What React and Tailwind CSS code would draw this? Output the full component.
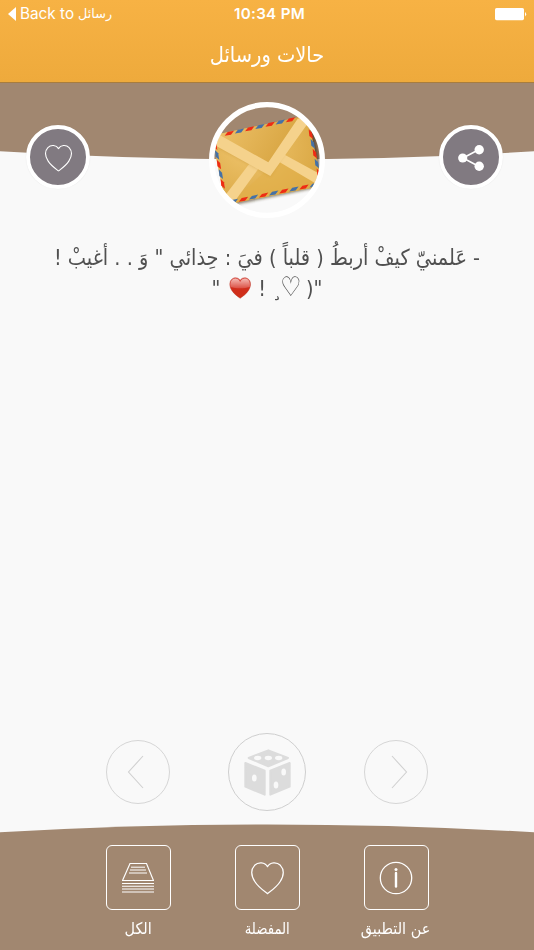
import React from "react";

const heartPath =
  "M50 15 C42 1 22 0 11 11 C-2 25 2 45 12 61 C22 77 37 87 50 97 C63 87 78 77 88 61 C98 45 102 25 89 11 C78 0 58 1 50 15 Z";

function Heart({ className, strokeWidth }) {
  return (
    <svg viewBox="-3 -2 106 103" className={className} fill="none" stroke="currentColor" strokeWidth={strokeWidth}>
      <path d={heartPath} strokeLinejoin="round" />
    </svg>
  );
}

const RED = "#ee2c14";
const BLUE = "#4571a6";

// Slanted airmail stripes, alternating colours from the first centre (x, y) along (dx, dy).
function Stripes({ x, y, dx, dy, count, first, shape }) {
  const other = first === RED ? BLUE : RED;
  return Array.from({ length: count }, (_, i) => (
    <path key={i} d={shape} transform={`translate(${x + dx * i} ${y + dy * i})`} fill={i % 2 ? other : first} />
  ));
}

function Envelope() {
  const across = "M-14 7 L-5 -4 L14 -8 L5 4 Z";
  const down = "M-6 -15 L4 -5 L7 14 L-4 5 Z";
  return (
    <svg viewBox="57 36 348 348" className="ml-[4px] block h-[116px] w-[116px]">
      <defs>
        <clipPath id="disc"><circle cx="231" cy="210" r="159" /></clipPath>
        <clipPath id="paper"><path d="M66 143 Q66 137 73 135 L330 81 Q350 78 355 92 L397 281 Q397 287 390 289 L118 342 Q108 343 105 335 Z" /></clipPath>
        <radialGradient id="gold" cx="35%" cy="35%" r="75%">
          <stop offset="0" stopColor="#f0c66f" />
          <stop offset="1" stopColor="#d6a23c" />
        </radialGradient>
        <linearGradient id="fold" x1="0" y1="0" x2="1" y2="0.3">
          <stop offset="0" stopColor="#f1c670" />
          <stop offset="1" stopColor="#d7a440" />
        </linearGradient>
        <filter id="shade" x="-20%" y="-20%" width="140%" height="140%"><feGaussianBlur stdDeviation="5" /></filter>
      </defs>
      <g clipPath="url(#disc)">
        <path d="M80 145 L352 88 Q366 98 372 118 L400 289 L118 347 Z" fill="#35250c" opacity=".6" filter="url(#shade)" />
        <g clipPath="url(#paper)">
          <rect x="57" y="60" width="348" height="300" fill="url(#gold)" />
          <path d="M110 350 L280 195 L400 300 Z" fill="#e2b04b" opacity=".6" />
          <path d="M100 323 L185 212 L212 227 L127 344 Z" fill="#f5d28c" />
          <path d="M263 213 L284 194 L393 254 L385 285 Z" fill="#f5d28c" />
          <path d="M63 128 L360 66 L241 258 L65 162 Z" fill="#b78627" opacity=".35" filter="url(#shade)" />
          <path d="M60 128 L235 217 L345 70 L220 90 Z" fill="url(#fold)" />
          <path d="M63 128 L93 137 L235 217 L323 86 L360 78 L350 105 L241 258 L65 160 Z" fill="#f5d28c" />
        </g>
        <Stripes x={118} y={130} dx={30.6} dy={-6.7} count={7} first={RED} shape={across} />
        <Stripes x={130} y={334} dx={30.3} dy={-6.1} count={9} first={BLUE} shape={across} />
        <Stripes x={75} y={166} dx={5.7} dy={29} count={5} first={RED} shape={down} />
        <Stripes x={362} y={133} dx={6} dy={29.3} count={6} first={RED} shape={down} />
      </g>
      <circle cx="231" cy="210" r="166" fill="none" stroke="#fff" strokeWidth="16" />
    </svg>
  );
}

function RoundButton({ children }) {
  return (
    <button className="flex h-16 w-16 items-center justify-center rounded-full border-4 border-white bg-[#817a81] text-white shadow-[0_0_1px_rgba(0,0,0,0.12)]">
      {children}
    </button>
  );
}

function ShareIcon() {
  return (
    <svg viewBox="0 0 26 26" className="mt-px h-[26px] w-[26px]" fill="#fff" stroke="#fff">
      <path d="M21 4.5 L5 13 L21 21.5" fill="none" strokeWidth="1.6" />
      <circle cx="4.7" cy="13" r="4.6" stroke="none" />
      <circle cx="21.2" cy="4.8" r="4.7" stroke="none" />
      <circle cx="21.2" cy="21.3" r="4.7" stroke="none" />
    </svg>
  );
}

function RedHeart() {
  return (
    <svg viewBox="0 0 100 100" preserveAspectRatio="none" className="ml-[3px] mr-px inline-block h-[22px] w-[25px] align-[-3px]">
      <defs>
        <linearGradient id="red" x1="0" y1="0" x2="0" y2="1">
          <stop offset="0" stopColor="#df4a42" />
          <stop offset="0.5" stopColor="#d02d1c" />
          <stop offset="1" stopColor="#cf3017" />
        </linearGradient>
        <linearGradient id="gloss" x1="0" y1="0" x2="0" y2="1">
          <stop offset="0" stopColor="#f4bab4" />
          <stop offset="1" stopColor="#db5145" />
        </linearGradient>
      </defs>
      <path d={heartPath} fill="url(#red)" stroke="#b83a2b" strokeWidth="2" />
      <path d="M6 45 C2 18 16 6 29 7 C42 8 47 17 50 23 C53 17 58 8 71 7 C84 6 98 18 94 45 C68 53 32 53 6 45 Z" fill="url(#gloss)" />
    </svg>
  );
}

function Chevron({ d }) {
  return (
    <button className="flex h-16 w-16 items-center justify-center rounded-full border border-[#d6d6d6]">
      <svg viewBox="0 0 64 64" className="h-16 w-16 shrink-0" fill="none" stroke="#d0d0d0" strokeWidth="1.1">
        <path d={d} />
      </svg>
    </button>
  );
}

function Dice() {
  return (
    <svg viewBox="461 84 141 141" className="h-[47px] w-[47px]">
      <g fill="#dcdcdc" stroke="#dcdcdc" strokeWidth="6" strokeLinejoin="round">
        <path d="M475 111 L534 88 L593 111 L534 136 Z" />
        <path d="M465 126 L523 149 L523 221 L465 197 Z" />
        <path d="M540 149 L598 126 L598 197 L540 221 Z" />
      </g>
      <g fill="#f9f9f9">
        <ellipse cx="502" cy="111" rx="11" ry="6.5" />
        <ellipse cx="534" cy="111" rx="11" ry="6.5" />
        <ellipse cx="565" cy="111" rx="11" ry="6.5" />
        <ellipse cx="492" cy="171" rx="7" ry="10.5" />
        <ellipse cx="580" cy="153" rx="7" ry="10.5" />
        <ellipse cx="557" cy="192" rx="7" ry="10.5" />
      </g>
    </svg>
  );
}

function Tab({ label, labelClass, children }) {
  return (
    <div className="flex w-16 flex-col items-center">
      <div className="flex h-[65px] w-[65px] items-center justify-center rounded-[6px] border border-white">{children}</div>
      <span dir="rtl" className={"mt-[7px] whitespace-nowrap text-[16px] leading-6 " + labelClass}>{label}</span>
    </div>
  );
}

export default function App() {
  return (
    <div className="flex h-[950px] w-[534px] flex-col overflow-hidden bg-[#f9f9f9] font-['DejaVu_Sans',sans-serif] text-white">
      <header className="h-[83px] shrink-0 border-b border-[#a87d3e] bg-linear-to-b from-[#f7b244] to-[#eeaa3c]">
        <div className="grid h-7 grid-cols-3 items-center pl-2 pr-[7px]">
          <div className="flex items-center whitespace-nowrap font-[Inter,sans-serif] text-[15.3px]">
            <svg viewBox="0 0 8 14" className="mr-[4px] h-[14px] w-2" fill="#fff"><path d="M0 7 L8 0 V14 Z" /></svg>
            <span>Back to</span>
            <span dir="rtl" className="ml-[4px] font-['DejaVu_Sans',sans-serif] text-[12.8px]">رسائل</span>
          </div>
          <div className="pl-[4px] text-center font-[Inter,sans-serif] text-[15.2px] font-semibold tracking-[0.3px]">10:34 PM</div>
          <svg viewBox="0 0 32 13" className="h-[13px] w-8 justify-self-end" fill="#fff">
            <rect x="0" y="0" width="29" height="12.2" rx="1.6" />
            <path d="M30 4 Q32.4 6.2 30 8.4 Z" />
          </svg>
        </div>
        <h1 dir="rtl" className="scale-x-[0.925] pt-[11px] text-center text-[21px] leading-8">حالات ورسائل</h1>
      </header>

      <section className="relative h-[138px] shrink-0">
        <svg viewBox="0 0 534 80" className="absolute left-0 top-0 h-20 w-[534px]">
          <path d="M0 0 H534 V68.3 Q400 76.5 267 76.5 Q134 76.5 0 68.3 Z" fill="#a18770" />
        </svg>
        <div className="relative flex justify-between px-[26px] pt-[19px]">
          <div className="pt-[23px]"><RoundButton><Heart className="mt-px h-[28px] w-[29px]" strokeWidth="4" /></RoundButton></div>
          <Envelope />
          <div className="pr-[5px] pt-[23px]"><RoundButton><ShareIcon /></RoundButton></div>
        </div>
      </section>

      <main dir="rtl" className="flex-1 pt-[22px] text-center text-[22px] leading-[30px] text-[#505050]">
        <p className="scale-x-[0.88] whitespace-nowrap">- عَلمنيّ كيفْ أربطُ ( قلباً ) فيَ : حِذائي " وَ . . أغيبْ !</p>
        <p className="scale-x-[0.88] whitespace-nowrap">
          "( <span className="-mx-[2px] text-[27px] leading-none">♡</span>¸ ! <RedHeart /> "
        </p>
      </main>

      <nav className="flex h-[78px] shrink-0 items-center justify-center gap-[58px]">
        <Chevron d="M37 16 L22.5 32 L37 48" />
        <button className="flex h-[78px] w-[78px] items-center justify-center rounded-full border border-[#cfcfcf]"><Dice /></button>
        <Chevron d="M28 16 L42.5 32 L28 48" />
      </nav>

      <footer className="relative mt-[13px] h-[126px] shrink-0">
        <svg viewBox="0 0 534 126" className="absolute left-0 top-0 h-[126px] w-[534px]">
          <path d="M0 8.3 Q134 0.5 267 0.5 Q400 0.5 534 8.3 V126 H0 Z" fill="#a18770" />
        </svg>
        <div className="relative flex justify-center gap-[65px] pt-[21px]">
          <Tab label="الكل" labelClass="scale-x-[0.9]">
            <svg viewBox="0 0 32 32" className="h-8 w-8" fill="none" stroke="#fff">
              <path d="M8 1.5 H24.5 L31.5 18.5 H0.5 Z" strokeWidth="1.2" />
              <path d="M9 5.2 H23 M8 8 H24 M7 11 H25" strokeWidth="1" />
              <path d="M0 21.5 H32 M0 24.2 H32 M0 27 H32 M0 30 H32" strokeWidth="1.1" />
            </svg>
          </Tab>
          <Tab label="المفضلة" labelClass="scale-x-[0.83]"><Heart className="h-[34px] w-[35px]" strokeWidth="3.7" /></Tab>
          <Tab label="عن التطبيق" labelClass="scale-x-[0.9]">
            <svg viewBox="0 0 34 34" className="h-[34px] w-[34px]" fill="none" stroke="#fff">
              <circle cx="17" cy="17" r="15.7" strokeWidth="1.3" />
              <path d="M17 12 V25.5" strokeWidth="2.4" strokeLinecap="round" />
              <circle cx="17" cy="8.6" r="1.5" fill="#fff" stroke="none" />
            </svg>
          </Tab>
        </div>
      </footer>
    </div>
  );
}
